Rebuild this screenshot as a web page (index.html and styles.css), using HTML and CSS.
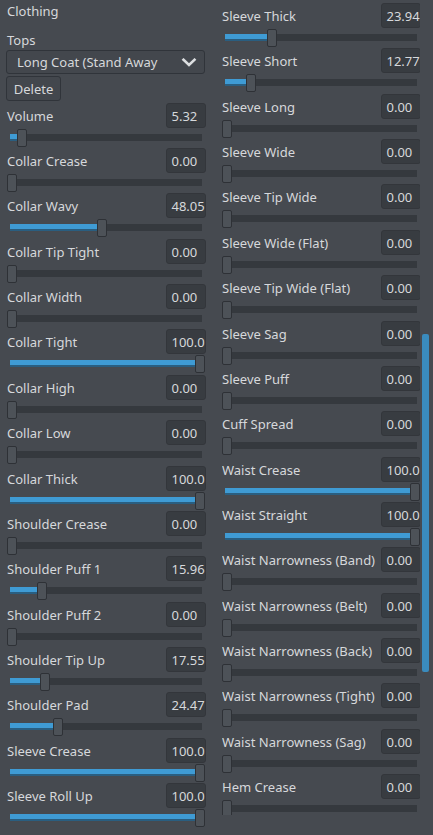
FILE: index.html
```html
<!DOCTYPE html>
<html>
<head>
<meta charset="utf-8">
<link rel="stylesheet" href="styles.css">
</head>
<body>
<div class="panel">
  <div class="col col-left">
    <div class="title">Clothing</div>
    <div class="sub">Tops</div>
    <div class="dropdown">
      <span class="dd-text">Long Coat (Stand Away</span>
      <svg class="chev" width="16" height="9" viewBox="0 0 16 9"><path d="M2.5 1.8 L8 7 L13.5 1.8" fill="none" stroke="#dcdee0" stroke-width="2.6" stroke-linecap="square"/></svg>
    </div>
    <div class="btn">Delete</div>
    <div class="rows" id="left"></div>
  </div>
  <div class="col col-right">
    <div class="rows" id="right"></div>
  </div>
  <div class="scrollbar"></div>
</div>
<script src="app.js"></script>
</body>
</html>
```
FILE: app.js
```js
const left = [
  ["Volume","5.32",5.32],["Collar Crease","0.00",0],["Collar Wavy","48.05",48.05],
  ["Collar Tip Tight","0.00",0],["Collar Width","0.00",0],["Collar Tight","100.0",100],
  ["Collar High","0.00",0],["Collar Low","0.00",0],["Collar Thick","100.0",100],
  ["Shoulder Crease","0.00",0],["Shoulder Puff 1","15.96",15.96],["Shoulder Puff 2","0.00",0],
  ["Shoulder Tip Up","17.55",17.55],["Shoulder Pad","24.47",24.47],["Sleeve Crease","100.0",100],
  ["Sleeve Roll Up","100.0",100]
];
const right = [
  ["Sleeve Thick","23.94",23.94],["Sleeve Short","12.77",12.77],["Sleeve Long","0.00",0],
  ["Sleeve Wide","0.00",0],["Sleeve Tip Wide","0.00",0],["Sleeve Wide (Flat)","0.00",0],
  ["Sleeve Tip Wide (Flat)","0.00",0],["Sleeve Sag","0.00",0],["Sleeve Puff","0.00",0],
  ["Cuff Spread","0.00",0],["Waist Crease","100.0",100],["Waist Straight","100.0",100],
  ["Waist Narrowness (Band)","0.00",0],["Waist Narrowness (Belt)","0.00",0],
  ["Waist Narrowness (Back)","0.00",0],["Waist Narrowness (Tight)","0.00",0],
  ["Waist Narrowness (Sag)","0.00",0],["Hem Crease","0.00",0]
];
function build(id, data){
  const host = document.getElementById(id);
  data.forEach(([label, val, v]) => {
    const row = document.createElement('div');
    row.className = 'row';
    row.innerHTML =
      '<div class="head"><span class="label">' + label + '</span><span class="val">' + val + '</span></div>' +
      '<div class="slider" style="--v:' + v + '"><div class="track"><div class="fill"></div></div><div class="thumb"></div></div>';
    host.appendChild(row);
  });
}
build('left', left);
build('right', right);
```
FILE: styles.css
```css
html, body {
  margin: 0;
  padding: 0;
  background: #464a50;
  overflow: hidden;
}
body {
  width: 433px;
  height: 835px;
  font-family: "Noto Sans", "Open Sans", sans-serif;
  font-size: 13px;
  color: #d6d8db;
}
.panel {
  position: relative;
  display: flex;
  gap: 17px;
  padding-left: 7px;
  height: 835px;
}
.col {
  width: 198px;
  flex: none;
  display: flex;
  flex-direction: column;
}
.col-right {
  padding-top: 3px;
  height: 812px;
  overflow: hidden;
}
.title {
  height: 22px;
  line-height: 22px;
  margin-bottom: 8px;
}
.sub {
  height: 20px;
  line-height: 20px;
}
.dropdown {
  margin-left: -1px;
  height: 24px;
  box-sizing: border-box;
  border: 1px solid #30343a;
  border-radius: 3px;
  background: #43474d;
  display: flex;
  align-items: center;
  padding: 0 7px 0 10px;
}
.dd-text {
  white-space: nowrap;
}
.chev {
  margin-left: auto;
}
.btn {
  margin-top: 2px;
  width: 55px;
  height: 25px;
  box-sizing: border-box;
  margin-left: -1px;
  border: 1px solid #30343a;
  border-radius: 3px;
  background: #43474d;
  display: flex;
  align-items: center;
  justify-content: center;
  margin-bottom: 1.7px;
}
.rows {
  display: flex;
  flex-direction: column;
}
.row {
  height: 45.37px;
  display: flex;
  flex-direction: column;
}
.head {
  height: 26px;
  display: flex;
  align-items: flex-start;
  justify-content: space-between;
}
.label {
  line-height: 26px;
  white-space: nowrap;
}
.val {
  width: 40px;
  height: 25px;
  line-height: 25px;
  box-sizing: border-box;
  padding-left: 5px;
  background: #383c41;
  border: 1px solid #33363b;
  border-radius: 3px;
  margin-right: -0.5px;
}
.slider {
  position: relative;
  height: 19.37px;
}
.track {
  position: absolute;
  left: 3px;
  right: 3px;
  top: 5px;
  height: 7px;
  background: #35393e;
}
.fill {
  height: 7px;
  box-sizing: border-box;
  width: calc((100% + 6px - 10px) * var(--v) / 100 + 2px);
  background: #3f9bd4;
  border-bottom: 2px solid #2a5e80;
}
.thumb {
  position: absolute;
  top: 0;
  left: calc((100% - 10px) * var(--v) / 100);
  width: 10px;
  height: 18px;
  box-sizing: border-box;
  background: #4d5258;
  border: 1px solid #2e3136;
  border-radius: 2px;
}
.scrollbar {
  position: absolute;
  left: 422px;
  top: 334px;
  width: 7px;
  height: 338px;
  background: #3a8bbd;
  border-radius: 2px;
}
```
